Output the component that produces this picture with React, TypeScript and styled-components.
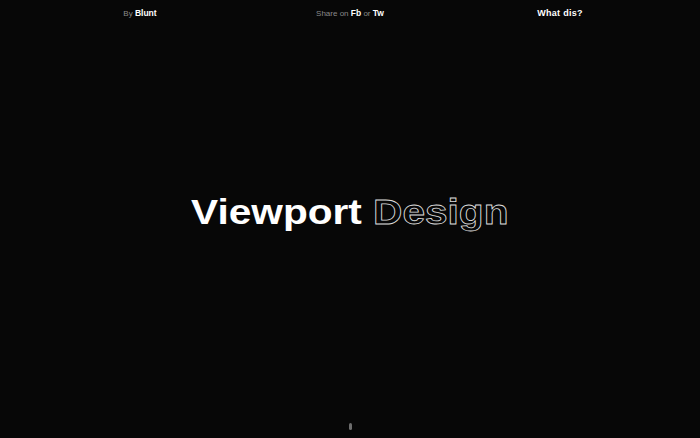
import styled, { createGlobalStyle } from 'styled-components';

const GlobalStyle = createGlobalStyle`
  html, body {
    margin: 0;
    padding: 0;
    background: #070707;
  }
  body {
    font-family: "Liberation Sans", Arial, sans-serif;
    color: #fff;
  }
`;

const Page = styled.div`
  width: 100%;
  height: 100vh;
  display: flex;
  flex-direction: column;
  background: #070707;
  overflow: hidden;
`;

const Header = styled.header`
  display: grid;
  grid-template-columns: repeat(3, 1fr);
  padding: 8px 35px 0;
  height: 20px;
  box-sizing: border-box;
  font-size: 8px;
  line-height: 10px;
`;

const HeaderItem = styled.div`
  text-align: center;
  color: #8a8a8a;
`;

const Strong = styled.a<{ $big?: boolean }>`
  color: #fff;
  font-weight: 700;
  text-decoration: none;
  font-size: ${(p) => (p.$big ? '9px' : '8.5px')};
  letter-spacing: ${(p) => (p.$big ? '0.3px' : '0')};
`;

const Main = styled.main`
  flex: 1;
  display: flex;
  align-items: center;
  justify-content: center;
  padding-bottom: 12px;
`;

const Title = styled.h1`
  margin: 0;
  font-size: 35px;
  font-weight: 700;
  letter-spacing: 0;
  transform: scaleX(1.16);
  white-space: nowrap;
`;

const Outline = styled.span`
  color: transparent;
  -webkit-text-stroke: 0.8px #dcdcdc;
`;

const Footer = styled.footer`
  height: 22px;
  display: flex;
  justify-content: center;
  align-items: flex-start;
`;

const Pill = styled.div`
  width: 3px;
  height: 7px;
  border-radius: 2px;
  background: #6d6d6d;
  margin-top: 7px;
`;

export default function App() {
  return (
    <Page>
      <GlobalStyle />
      <Header>
        <HeaderItem>
          By <Strong href="#">Blunt</Strong>
        </HeaderItem>
        <HeaderItem>
          Share on <Strong href="#">Fb</Strong> or <Strong href="#">Tw</Strong>
        </HeaderItem>
        <HeaderItem>
          <Strong href="#" $big>
            What dis?
          </Strong>
        </HeaderItem>
      </Header>
      <Main>
        <Title>
          Viewport <Outline>Design</Outline>
        </Title>
      </Main>
      <Footer>
        <Pill />
      </Footer>
    </Page>
  );
}
